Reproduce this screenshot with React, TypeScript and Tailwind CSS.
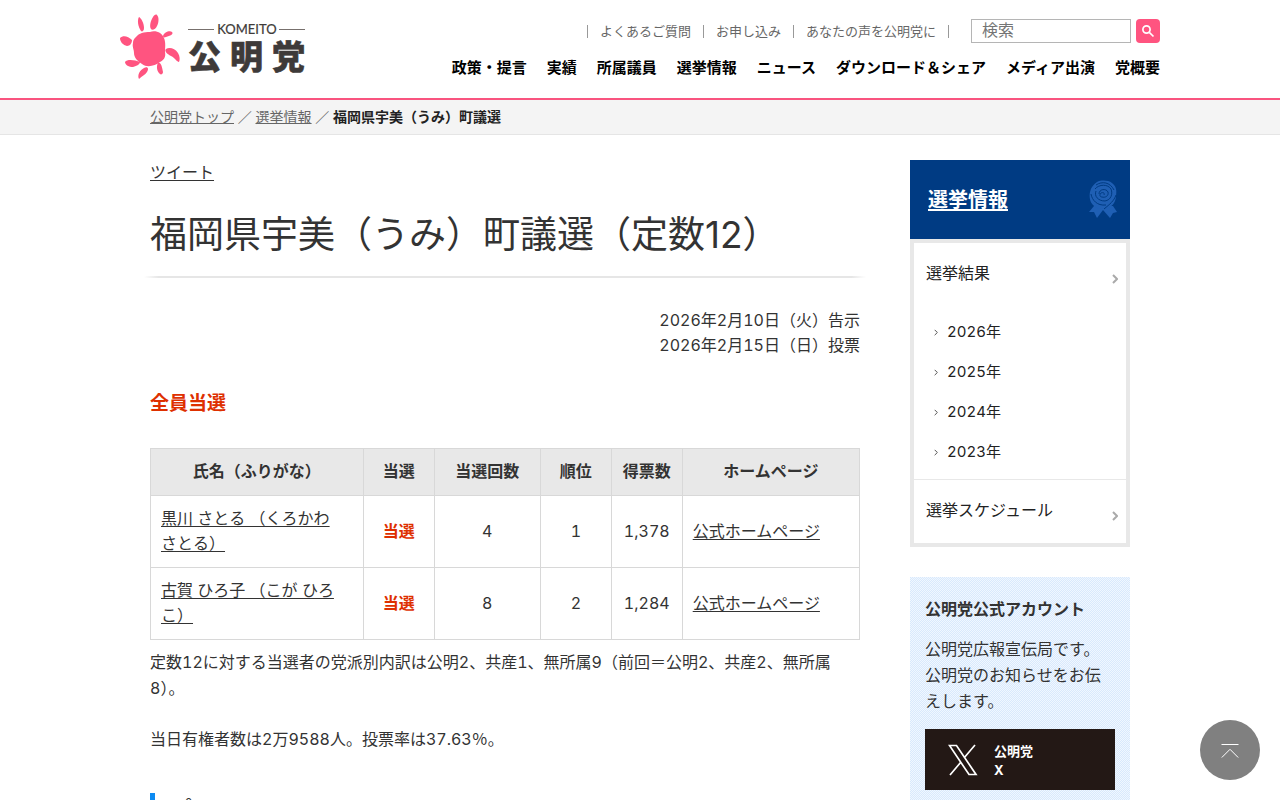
import type { ReactNode } from "react";

const utilityLinks = ["よくあるご質問", "お申し込み", "あなたの声を公明党に"];
const navLinks = ["政策・提言", "実績", "所属議員", "選挙情報", "ニュース", "ダウンロード＆シェア", "メディア出演", "党概要"];
const years = ["2026年", "2025年", "2024年", "2023年"];
const candidates = [
  { name: "黒川 さとる （くろかわ", rest: "さとる）", count: "4", rank: "1", votes: "1,378" },
  { name: "古賀 ひろ子 （こが ひろ", rest: "こ）", count: "8", rank: "2", votes: "1,284" },
];

function Logo() {
  return (
    <svg viewBox="0 0 186 66" className="h-[66px] w-[186px]" role="img" aria-label="公明党 KOMEITO">
      <g fill="#ff5480">
        <path d="M16 23C19 19 24 18 30 18C36 16 42 19 44 24C46 29 45 34 45 38C46 43 44 46 40 48C35 52 27 54 22 50C17 47 14 43 14 39C14 35 12 33 13 29C13 26 14 25 16 23Z" />
        <path d="M19 3C21 4 24 9 24 14C24 17 22 18 21 17C18 13 17 6 19 3Z" />
        <path d="M37 1C39 3 39 8 37 12C36 15 32 17 31 15C29 12 31 6 33 3C34 1 36 0 37 1Z" />
        <path d="M43 22C44 18 50 16 52 18C54 20 50 22 46 23C44 24 43 23 43 22Z" />
        <path d="M46 35C49 33 55 34 58 39C60 42 60 46 59 48C57 48 55 44 51 42C47 40 44 37 46 35Z" />
        <path d="M0 24C3 21 8 22 12 26C12 29 10 32 7 32C3 31 0 28 0 24Z" />
        <path d="M5 48C7 45 15 46 20 48C20 50 17 52 13 53C9 53 5 51 5 48Z" />
        <path d="M19 65C17 61 20 56 24 54C28 52 29 55 27 58C25 61 22 62 19 65Z" />
        <path d="M38 49C41 48 42 53 43 58C43 60 41 61 40 60C37 58 36 52 38 49Z" />
      </g>
      <path d="M68 15.500H94M159 15.500H185" stroke="#77706d" strokeWidth="1" />
      <text x="127" y="20" textAnchor="middle" fontSize="13" fill="#3e3a39" stroke="#3e3a39" strokeWidth="0.200" className="font-['Lato','Open_Sans',sans-serif]">KOMEITO</text>
      <g fontSize="33" fontWeight="900" fill="#3e3a39" stroke="#3e3a39" strokeWidth="0.600" className="font-['Noto_Sans_CJK_JP',sans-serif]">
        <text x="68" y="55">公</text>
        <text x="110" y="55">明</text>
        <text x="152" y="55">党</text>
      </g>
    </svg>
  );
}

function Chevron({ className }: { className: string }) {
  return (
    <svg viewBox="0 0 6 10" fill="none" stroke="currentColor" className={className} aria-hidden="true">
      <path d="M1 1l4 4-4 4" />
    </svg>
  );
}

function Rosette() {
  return (
    <svg viewBox="0 0 30 40" className="h-10 w-[30px]" aria-hidden="true">
      <path d="M6 26L1 32L6 32L9 38L15 30L22 38L25 33L29 32L25 26Z" fill="#1f5fb4" />
      <path d="M9 2C13 0 20 0 24 3C28 6 29 10 28 16C28 21 25 26 20 28C15 30 9 29 5 25C2 22 1 17 2 12C3 7 6 4 9 2Z" fill="#1f5fb4" />
      <g fill="none" stroke="#003b83" strokeWidth="1">
        <path d="M7 9C11 4 20 4 23 9C25 14 23 20 17 21C10 21 6 16 8 11M11 14C11 9 18 8 20 12C21 16 17 18 14 17C12 17 11 15 13 13C15 12 17 13 16 15" />
        <path d="M3 14C4 20 9 26 18 25M28 15C26 21 22 24 16 29M8 5C14 1 22 2 26 10" />
      </g>
    </svg>
  );
}

function Cell({ children, className = "py-2" }: { children: ReactNode; className?: string }) {
  return <td className={`border border-[#d8d8d8] px-[10px] ${className}`}>{children}</td>;
}

export default function App() {
  return (
    <div className="min-h-screen bg-white font-['Inter','Noto_Sans_CJK_JP',sans-serif] text-base leading-[26px] text-[#333] tabular-nums" lang="ja">
      <header className="border-b-2 border-[#f9547f]">
        <div className="mx-auto flex h-[98px] max-w-[1040px] justify-between">
          <a href="#top" className="pt-[14px]"><Logo /></a>
          <div className="flex flex-col items-end pt-[19px]">
            <div className="flex items-center">
              <ul className="flex border-r border-[#999] text-[13px] leading-[13px] text-[#666]">
                {utilityLinks.map((t) => (
                  <li key={t} className="border-l border-[#999] px-3"><a href="#link">{t}</a></li>
                ))}
              </ul>
              <form className="ml-[22px] flex gap-[5px]" onSubmit={(e) => e.preventDefault()}>
                <input type="text" aria-label="検索" placeholder="検索" className="h-6 w-40 border border-[#b5b5b5] px-[10px] pb-[2px] text-base leading-5 outline-none placeholder:text-[#757575]" />
                <button type="submit" aria-label="検索する" className="flex size-6 items-center justify-center rounded bg-[#ff5480]">
                  <svg viewBox="0 0 14 14" className="size-[14px]" fill="none" stroke="#fff" strokeWidth="1.700" aria-hidden="true">
                    <circle cx="5.500" cy="5.500" r="3.600" /><path d="M8.300 8.300l4.200 4.200" />
                  </svg>
                </button>
              </form>
            </div>
            <nav className="mt-3">
              <ul className="flex gap-5 text-[15px] font-bold text-black">
                {navLinks.map((t) => <li key={t}><a href="#nav">{t}</a></li>)}
              </ul>
            </nav>
          </div>
        </div>
      </header>

      <div className="border-b border-[#e5e5e5] bg-[#f4f4f4]">
        <nav aria-label="パンくず" className="mx-auto max-w-[980px] py-1 text-sm leading-[26px] text-[#666]">
          <a href="#home" className="underline">公明党トップ</a>
          <span> ／ </span>
          <a href="#election" className="underline">選挙情報</a>
          <span> ／ </span>
          <strong className="text-[#222]">福岡県宇美（うみ）町議選</strong>
        </nav>
      </div>

      <div className="mx-auto flex max-w-[980px] justify-between pt-[25px]">
        <main className="w-[710px]">
          <a href="#tweet" className="block leading-6 underline underline-offset-2">ツイート</a>
          <h1 className="mt-6 text-[37px] leading-[54px] proportional-nums">福岡県宇美（うみ）町議選（定数12）</h1>
          <div className="-mx-[6px] mt-[14px] h-[2px] [background-image:linear-gradient(to_right,transparent,#e6e6e6_2%,#e6e6e6_98%,transparent)]" />
          <p className="mt-[30px] text-right leading-[25px]">2026年2月10日（火）告示<br />2026年2月15日（日）投票</p>
          <p className="mt-[33px] text-[19px] font-bold text-[#de3000]">全員当選</p>
          <table className="mt-[31px] w-full table-fixed border-collapse text-center leading-[25px]">
            <thead>
              <tr className="h-[47px] bg-[#e8e8e8]">
                <th className="w-[30%] border border-[#d8d8d8] pb-[2px]">氏名（ふりがな）</th>
                <th className="w-[10%] border border-[#d8d8d8] pb-[2px]">当選</th>
                <th className="w-[15%] border border-[#d8d8d8] pb-[2px]">当選回数</th>
                <th className="w-[10%] border border-[#d8d8d8] pb-[2px]">順位</th>
                <th className="w-[10%] border border-[#d8d8d8] pb-[2px]">得票数</th>
                <th className="w-[25%] border border-[#d8d8d8] pb-[2px]">ホームページ</th>
              </tr>
            </thead>
            <tbody>
              {candidates.map((c) => (
                <tr key={c.name} className="h-[72px]">
                  <Cell className="pt-2 pb-[10px] text-left"><a href="#profile" className="underline underline-offset-2">{c.name}<br />{c.rest}</a></Cell>
                  <Cell className="py-2 font-bold text-[#de3000]">当選</Cell>
                  <Cell>{c.count}</Cell>
                  <Cell>{c.rank}</Cell>
                  <Cell>{c.votes}</Cell>
                  <Cell className="py-2 text-left"><a href="#site" className="underline underline-offset-2">公式ホームページ</a></Cell>
                </tr>
              ))}
            </tbody>
          </table>
          <p className="mt-[9px]">定数12に対する当選者の党派別内訳は公明2、共産1、無所属9（前回＝公明2、共産2、無所属8）。</p>
          <p className="mt-[25px]">当日有権者数は2万9588人。投票率は37.63％。</p>
          <h2 className="mt-[41px] border-l-[5px] border-[#0d8bf2] pl-[14px] text-2xl leading-9">ポイント</h2>
        </main>

        <aside className="w-[220px]">
          <div className="flex h-[79px] items-center justify-between bg-[#003b83] pr-3 pl-[18px]">
            <a href="#election" className="text-xl font-bold text-white underline underline-offset-2">選挙情報</a>
            <Rosette />
          </div>
          <ul className="border-4 border-[#e8e8e8] text-[#222]">
            <li className="pb-[7px]">
              <a href="#results" className="flex justify-between px-2 pt-[17px] pl-3">
                選挙結果<Chevron className="mt-[14px] h-[10px] w-[6px] stroke-2 text-[#aaa]" />
              </a>
              <ul className="mt-[26px] text-[15px] leading-10">
                {years.map((y) => (
                  <li key={y}>
                    <a href="#year" className="flex items-center gap-[9px] pl-5"><Chevron className="h-[7px] w-[4px] stroke-[1.5px] text-[#555]" />{y}</a>
                  </li>
                ))}
              </ul>
            </li>
            <li className="border-t border-[#e8e8e8]">
              <a href="#schedule" className="flex justify-between px-2 pt-[17px] pb-5 pl-3">
                選挙スケジュール<Chevron className="mt-[14px] h-[10px] w-[6px] stroke-2 text-[#aaa]" />
              </a>
            </li>
          </ul>
          <section className="mt-[30px] bg-[#e6f1fd] bg-[repeating-conic-gradient(#f0f7ff_0_25%,#d9e9fc_0_50%)] bg-[length:2px_2px] px-[15px] pt-[19px] pb-10">
            <h2 className="font-bold">公明党公式アカウント</h2>
            <p className="mt-[14px]">公明党広報宣伝局です。公明党のお知らせをお伝えします。</p>
            <a href="#x" className="mt-[15px] flex h-[61px] items-center bg-[#231815] pl-[23px] text-[13px] leading-[19px] font-bold text-white">
              <svg viewBox="0 0 30 32" className="h-8 w-[30px]" fill="none" stroke="#fff" strokeWidth="1.700" aria-hidden="true">
                <path d="M1.500 1.500H8.500L28 30.500H21ZM27 1L16 14M13 18L2 31" />
              </svg>
              <span className="ml-4 pt-[3px]">公明党<br />X</span>
            </a>
          </section>
        </aside>
      </div>

      <a href="#top" aria-label="ページの先頭へ" className="fixed right-5 bottom-5 flex size-[60px] items-center justify-center rounded-full bg-[#808080]">
        <svg viewBox="0 0 18 16" className="h-4 w-[18px]" fill="none" stroke="#fff" aria-hidden="true">
          <path d="M0.500 2.500H17.500M0.800 15.500L9 7.300L17.200 15.500" />
        </svg>
      </a>
    </div>
  );
}
